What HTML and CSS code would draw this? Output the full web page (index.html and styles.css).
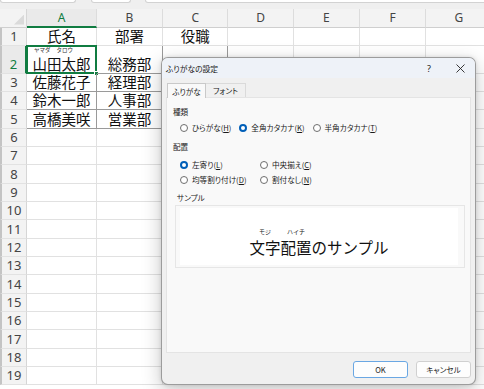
FILE: index.html
```html
<!DOCTYPE html>
<html lang="ja">
<head>
<meta charset="utf-8">
<title>ふりがなの設定</title>
<link rel="stylesheet" href="styles.css">
</head>
<body>
<div class="topbar"><div class="box b1"></div><div class="box b2"></div><div class="box b3"></div></div>
<div class="grid">
  <div class="corner"><i></i></div><div class="ch on">A</div><div class="ch">B</div><div class="ch">C</div><div class="ch">D</div><div class="ch">E</div><div class="ch">F</div><div class="ch">G</div>

  <div class="rh">1</div><div class="c t">氏名</div><div class="c t">部署</div><div class="c t">役職</div><div class="c"></div><div class="c"></div><div class="c"></div><div class="c"></div>

  <div class="rh on">2</div>
  <div class="c t d a2"><div class="furi"><span>ヤマダ</span><span class="f2">タロウ</span></div><div class="main">山田太郎</div><span class="selbox"><span class="handle"></span></span></div>
  <div class="c t d">総務部</div><div class="c d"></div><div class="c"></div><div class="c"></div><div class="c"></div><div class="c"></div>

  <div class="rh">3</div><div class="c t d">佐藤花子</div><div class="c t d">経理部</div><div class="c d"></div><div class="c"></div><div class="c"></div><div class="c"></div><div class="c"></div>
  <div class="rh">4</div><div class="c t d">鈴木一郎</div><div class="c t d">人事部</div><div class="c d"></div><div class="c"></div><div class="c"></div><div class="c"></div><div class="c"></div>
  <div class="rh">5</div><div class="c t d">高橋美咲</div><div class="c t d">営業部</div><div class="c d"></div><div class="c"></div><div class="c"></div><div class="c"></div><div class="c"></div>

  <div class="rh">6</div><div class="c"></div><div class="c"></div><div class="c"></div><div class="c"></div><div class="c"></div><div class="c"></div><div class="c"></div>
  <div class="rh">7</div><div class="c"></div><div class="c"></div><div class="c"></div><div class="c"></div><div class="c"></div><div class="c"></div><div class="c"></div>
  <div class="rh">8</div><div class="c"></div><div class="c"></div><div class="c"></div><div class="c"></div><div class="c"></div><div class="c"></div><div class="c"></div>
  <div class="rh">9</div><div class="c"></div><div class="c"></div><div class="c"></div><div class="c"></div><div class="c"></div><div class="c"></div><div class="c"></div>
  <div class="rh">10</div><div class="c"></div><div class="c"></div><div class="c"></div><div class="c"></div><div class="c"></div><div class="c"></div><div class="c"></div>
  <div class="rh">11</div><div class="c"></div><div class="c"></div><div class="c"></div><div class="c"></div><div class="c"></div><div class="c"></div><div class="c"></div>
  <div class="rh">12</div><div class="c"></div><div class="c"></div><div class="c"></div><div class="c"></div><div class="c"></div><div class="c"></div><div class="c"></div>
  <div class="rh">13</div><div class="c"></div><div class="c"></div><div class="c"></div><div class="c"></div><div class="c"></div><div class="c"></div><div class="c"></div>
  <div class="rh">14</div><div class="c"></div><div class="c"></div><div class="c"></div><div class="c"></div><div class="c"></div><div class="c"></div><div class="c"></div>
  <div class="rh">15</div><div class="c"></div><div class="c"></div><div class="c"></div><div class="c"></div><div class="c"></div><div class="c"></div><div class="c"></div>
  <div class="rh">16</div><div class="c"></div><div class="c"></div><div class="c"></div><div class="c"></div><div class="c"></div><div class="c"></div><div class="c"></div>
  <div class="rh">17</div><div class="c"></div><div class="c"></div><div class="c"></div><div class="c"></div><div class="c"></div><div class="c"></div><div class="c"></div>
  <div class="rh">18</div><div class="c"></div><div class="c"></div><div class="c"></div><div class="c"></div><div class="c"></div><div class="c"></div><div class="c"></div>
  <div class="rh">19</div><div class="c"></div><div class="c"></div><div class="c"></div><div class="c"></div><div class="c"></div><div class="c"></div><div class="c"></div>
</div>

<div class="dialog">
  <div class="titlebar">
    <span class="title">ふりがなの設定</span>
    <span class="help">?</span>
    <span class="close"><svg width="9" height="9" viewBox="0 0 9 9"><path d="M0.5 0.5L8.5 8.5M8.5 0.5L0.5 8.5" stroke="#222" stroke-width="0.9" fill="none"/></svg></span>
  </div>
  <div class="dbody">
    <div class="tabs">
      <div class="tab active">ふりがな</div>
      <div class="tab">フォント</div>
    </div>
    <div class="panel">
      <div class="label l1">種類</div>
      <div class="radios row3">
        <span class="radio"><span class="dot"></span>ひらがな(<u>H</u>)</span>
        <span class="radio"><span class="dot checked"></span>全角カタカナ(<u>K</u>)</span>
        <span class="radio"><span class="dot"></span>半角カタカナ(<u>T</u>)</span>
      </div>
      <div class="label l2">配置</div>
      <div class="radios grid2">
        <span class="radio"><span class="dot checked"></span>左寄り(<u>L</u>)</span>
        <span class="radio"><span class="dot"></span>中央揃え(<u>C</u>)</span>
        <span class="radio"><span class="dot"></span>均等割り付け(<u>D</u>)</span>
        <span class="radio"><span class="dot"></span>割付なし(<u>N</u>)</span>
      </div>
      <div class="label l3">サンプル</div>
      <div class="frame">
        <div class="sample"><span class="rb"><span class="rt">モジ</span><span>文字</span></span><span class="rb"><span class="rt">ハイチ</span><span>配置</span></span><span>のサンプル</span></div>
      </div>
    </div>
    <div class="buttons">
      <span class="btn default">OK</span>
      <span class="btn">キャンセル</span>
    </div>
  </div>
</div>
</body>
</html>
```
FILE: styles.css
```css
* { box-sizing: border-box; }
html, body { margin: 0; padding: 0; }
body {
  width: 484px;
  height: 389px;
  overflow: hidden;
  position: relative;
  background: #ffffff;
  font-family: "Noto Sans", "Noto Sans CJK JP", sans-serif;
  color: #111;
}

/* top strip */
.topbar {
  height: 9px;
  background: #efefef;
  display: flex;
  align-items: flex-start;
}
.box {
  height: 3px;
  background: #fff;
  border: 1px solid #d2d2d2;
  border-top: none;
  border-radius: 0 0 3px 3px;
}
.b1 { width: 76px; }
.b2 { width: 40px; margin-left: 15px; }
.b3 { flex: 1; margin-left: 14px; margin-right: -4px; }

/* sheet */
.grid {
  display: grid;
  width: 492px;
  grid-template-columns: 27px 70px 66px 65.4px 65.6px 65.7px 66.7px 66px;
  grid-template-rows: 18.5px 18.5px 27.7px repeat(17, 18.33px);
}
.corner {
  background: #f3f3f3;
  border-right: 1px solid #d6d6d6;
  border-bottom: 1px solid #cfcfcf;
  position: relative;
}
.corner i {
  position: absolute;
  right: 2px;
  bottom: 2px;
  width: 10px;
  height: 10px;
  background: #dadada;
  clip-path: polygon(100% 0, 100% 100%, 0 100%);
}
.ch {
  background: #f3f3f3;
  border-right: 1px solid #dcdcdc;
  border-bottom: 1px solid #cfcfcf;
  display: flex;
  align-items: center;
  justify-content: center;
  font-size: 12px;
  color: #444;
}
.ch.on {
  color: #107c41;
  border-bottom: 2px solid #107c41;
  background: #eaeaea;
}
.rh {
  background: #f3f3f3;
  border-left: 2px solid #c4c4c4;
  border-right: 1px solid #d6d6d6;
  border-bottom: 1px solid #e2e2e2;
  display: flex;
  align-items: flex-end;
  justify-content: center;
  font-size: 13px;
  line-height: 17px;
  color: #444;
}
.rh.on {
  color: #107c41;
  background: #eaeaea;
  border-right: 2px solid #107c41;
}
.c {
  border-right: 1px solid #e1e1e1;
  border-bottom: 1px solid #e1e1e1;
  position: relative;
}
.c.t {
  font-family: "Noto Sans CJK JP", sans-serif;
  font-size: 14.5px;
  line-height: 18px;
  color: #111;
  display: flex;
  flex-direction: column;
  justify-content: flex-end;
  align-items: center;
  white-space: nowrap;
}
.c.d {
  border-right-color: #9a9a9a;
  border-bottom-color: #9a9a9a;
}
.a2 .main { line-height: 15px; margin-bottom: 1.5px; }
.furi {
  font-size: 5.5px;
  line-height: 6px;
  margin-bottom: 3.5px;
  color: #333;
  align-self: flex-start;
  padding-left: 7px;
}
.furi .f2 { margin-left: 6px; }
.selbox {
  position: absolute;
  left: -1px;
  top: -1px;
  right: -1px;
  bottom: -1px;
  border: 2px solid #107c41;
}
.handle {
  position: absolute;
  right: -4px;
  bottom: -4px;
  width: 5px;
  height: 5px;
  background: #107c41;
  border: 1px solid #fff;
}

/* dialog */
.dialog {
  position: absolute;
  left: 161px;
  top: 57px;
  width: 315px;
  height: 328px;
  background: #f0f0f0;
  border: 1px solid rgba(0, 0, 0, 0.35);
  border-radius: 7px;
  overflow: hidden;
  box-shadow: 0 6px 20px rgba(0, 0, 0, 0.22), 0 0 4px rgba(0, 0, 0, 0.12);
  font-family: "Noto Sans CJK JP", sans-serif;
  font-feature-settings: "palt";
  color: #1a1a1a;
}
.titlebar {
  height: 20px;
  background: #eef2f8;
  display: flex;
  align-items: center;
  padding-left: 4px;
  font-size: 7.8px;
}
.title { flex: 1; }
.help {
  width: 16px;
  text-align: center;
  font-family: "Noto Sans", sans-serif;
  font-size: 9px;
  margin-right: 11px;
}
.close {
  width: 24px;
  margin-right: 3px;
  display: flex;
  justify-content: center;
}
.dbody {
  padding: 5px 4px 6px 4px;
}
.tabs {
  display: flex;
  height: 14px;
  padding-left: 1px;
}
.tab {
  width: 40px;
  height: 14px;
  display: flex;
  align-items: center;
  justify-content: center;
  font-size: 7.6px;
  border: 1px solid #dadada;
  border-bottom: none;
  background: #f0f0f0;
  color: #222;
}
.tab.active {
  width: 39px;
  background: #f9f9f9;
  border-color: #c9c9c9;
  position: relative;
  z-index: 1;
  height: 15px;
}
.tab + .tab { border-left: none; }
.panel {
  height: 256px;
  background: #f9f9f9;
  border: 1px solid #e4e4e4;
  padding: 8px 6px 0 6px;
  font-size: 7.6px;
}
.label {
  line-height: 12px;
  color: #222;
}
.l2 { margin-top: 7px; }
.l3 { margin-top: 6px; margin-left: 4px; }
.radios {
  margin-left: 7px;
  line-height: 12px;
}
.row3 {
  display: flex;
  gap: 8px;
  margin-top: 4px;
}
.grid2 {
  display: grid;
  grid-template-columns: 80px auto;
  row-gap: 3px;
  margin-top: 6px;
}
.radio {
  display: inline-flex;
  align-items: center;
  white-space: nowrap;
}
.radio u { text-decoration-thickness: 0.7px; text-underline-offset: 1px; }
.dot {
  width: 8px;
  height: 8px;
  border-radius: 50%;
  border: 1px solid #6e6e6e;
  background: #fff;
  margin-right: 4px;
  flex: none;
}
.dot.checked {
  border: 2.5px solid #005fb8;
  background: #fff;
}
.frame {
  margin-top: 1px;
  margin-left: 2px;
  width: 290px;
  border: 1px solid #e6e6e6;
  padding: 2px 6px 2px 4px;
}
.sample {
  height: 57px;
  background: #fff;
  display: flex;
  align-items: flex-end;
  justify-content: center;
  padding-bottom: 8px;
  font-size: 15.5px;
  line-height: 20px;
  font-feature-settings: normal;
  color: #111;
}
.rb {
  display: inline-flex;
  flex-direction: column;
  align-items: center;
}
.rt {
  font-size: 6px;
  line-height: 7px;
  margin-bottom: 2px;
  color: #222;
}
.buttons {
  display: flex;
  justify-content: flex-end;
  gap: 8px;
  margin-top: 8px;
}
.btn {
  width: 55px;
  height: 17px;
  display: flex;
  align-items: center;
  justify-content: center;
  font-size: 7.6px;
  background: #fdfdfd;
  border: 1px solid #d0d0d0;
  border-radius: 3px;
  color: #1a1a1a;
}
.btn.default {
  border-color: #6aa7e3;
}
```
